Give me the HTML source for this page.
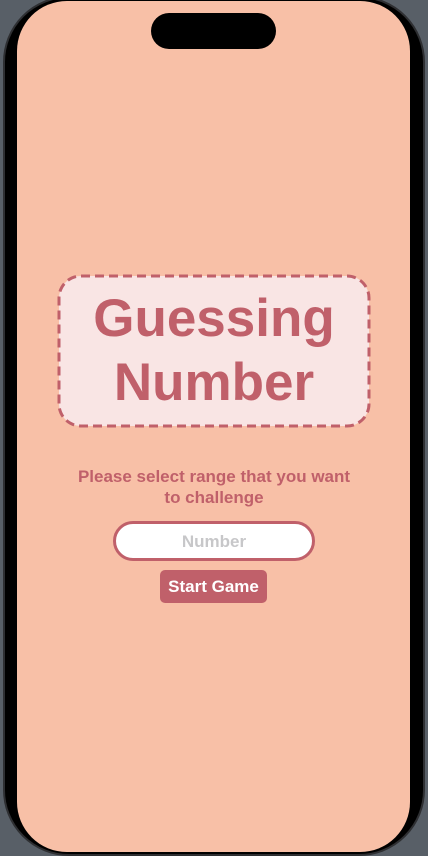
<!DOCTYPE html>
<html><head><style>
html,body{margin:0;padding:0;width:428px;height:853px;overflow:hidden;background:#585f67;font-family:"Liberation Sans",sans-serif}
.bezel{position:absolute;left:3px;top:-4px;width:422px;height:860px;background:#000;border-radius:66px;border:2px solid #2e2f32;box-sizing:border-box}
.screen{position:absolute;left:17px;top:1px;width:393px;height:851px;background:#f8c0a7;border-radius:50px}
.island{position:absolute;left:151px;top:13px;width:125px;height:36px;background:#000;border-radius:18px}
svg{position:absolute;left:57px;top:274px}
.box{position:absolute;left:58px;top:275px;width:312px;height:152px;box-sizing:border-box;color:#c0606a;font-weight:bold;font-size:53px;text-align:center;line-height:64px;padding-top:12px}
.txt{position:absolute;left:50px;width:328px;top:466px;text-align:center;color:#c0606a;font-weight:bold;font-size:17px;line-height:21px}
.inp{position:absolute;left:113px;top:521px;width:202px;height:40px;box-sizing:border-box;border:3px solid #c0606a;border-radius:20px;background:#fff;color:#c7c7c9;font-weight:bold;font-size:17px;text-align:center;line-height:36px}
.btn{position:absolute;left:160px;top:570px;width:107px;height:33px;background:#c0606a;border-radius:5px;color:#fff;font-weight:bold;font-size:17px;text-align:center;line-height:33px}
</style></head><body>
<div class="bezel"></div>
<div class="screen"></div>
<div class="island"></div>
<svg width="314" height="154"><rect x="2" y="2" width="310" height="150" rx="22" fill="#f9e5e4" stroke="#c0606a" stroke-width="3" stroke-dasharray="9 5"/></svg>
<div class="box">Guessing<br>Number</div>
<div class="txt">Please select range that you want<br>to challenge</div>
<div class="inp">Number</div>
<div class="btn">Start Game</div>
</body></html>
